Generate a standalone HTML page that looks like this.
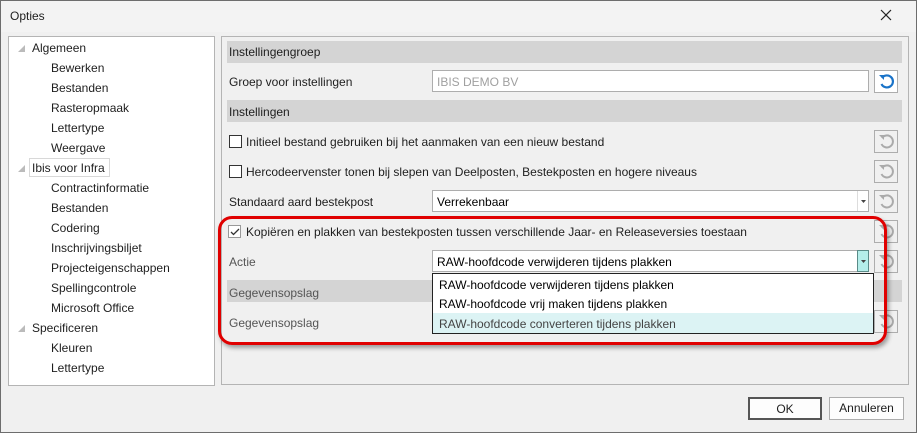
<!DOCTYPE html>
<html><head><style>
*{margin:0;padding:0;box-sizing:border-box}
body{width:917px;height:433px;background:#f0f0f0;font-family:"Liberation Sans",sans-serif;font-size:12px;color:#1e1e1e;position:relative;overflow:hidden}
.a{position:absolute;white-space:nowrap}
.win{position:absolute;left:0;top:0;width:917px;height:433px;border:1px solid #6d6d6d}
.t{position:absolute;line-height:14px}
.hdr{position:absolute;background:#d4d4d4;height:22px}
.inp{position:absolute;background:#fff;border:1px solid #adadad;height:22px}
.rb{position:absolute;width:24px;height:23px;border:1px solid #adadad;background:#f0f0f0}
.cb{position:absolute;width:13px;height:13px;border:1px solid #333;background:#fff}
.btn{position:absolute;height:23px;border:1px solid #adadad;background:#fdfdfd;text-align:center;line-height:21px}
</style></head><body>
<div class="win"></div>
<div class="a" style="left:1px;top:1px;width:915px;height:31px;background:#f3f3f3"></div>
<div class="t" style="left:10px;top:9px">Opties</div>
<svg class="a" style="left:880px;top:9px" width="12" height="12"><path d="M1 1L11 11M11 1L1 11" stroke="#222" stroke-width="1.2"/></svg>

<!-- tree -->
<div class="a" style="left:8px;top:36px;width:207px;height:350px;background:#fff;border:1px solid #b4b4b4"></div>
<svg class="a" style="left:18px;top:45px" width="8" height="8"><path d="M7 0L7 7L0 7Z" fill="#bbb"/></svg>
<svg class="a" style="left:18px;top:165px" width="8" height="8"><path d="M7 0L7 7L0 7Z" fill="#bbb"/></svg>
<svg class="a" style="left:18px;top:325px" width="8" height="8"><path d="M7 0L7 7L0 7Z" fill="#bbb"/></svg>
<div class="a" style="left:29px;top:158px;width:81px;height:19px;border:1px solid #d8d8d8"></div>
<div class="t" style="left:32px;top:41px">Algemeen</div>
<div class="t" style="left:51px;top:61px">Bewerken</div>
<div class="t" style="left:51px;top:81px">Bestanden</div>
<div class="t" style="left:51px;top:101px">Rasteropmaak</div>
<div class="t" style="left:51px;top:121px">Lettertype</div>
<div class="t" style="left:51px;top:141px">Weergave</div>
<div class="t" style="left:32px;top:161px">Ibis voor Infra</div>
<div class="t" style="left:51px;top:181px">Contractinformatie</div>
<div class="t" style="left:51px;top:201px">Bestanden</div>
<div class="t" style="left:51px;top:221px">Codering</div>
<div class="t" style="left:51px;top:241px">Inschrijvingsbiljet</div>
<div class="t" style="left:51px;top:261px">Projecteigenschappen</div>
<div class="t" style="left:51px;top:281px">Spellingcontrole</div>
<div class="t" style="left:51px;top:301px">Microsoft Office</div>
<div class="t" style="left:32px;top:321px">Specificeren</div>
<div class="t" style="left:51px;top:341px">Kleuren</div>
<div class="t" style="left:51px;top:361px">Lettertype</div>

<!-- right panel -->
<div class="a" style="left:221px;top:36px;width:688px;height:349px;border:1px solid #b4b4b4"></div>
<div class="hdr" style="left:227px;top:41px;width:675px"></div>
<div class="t" style="left:229px;top:45px">Instellingengroep</div>
<div class="t" style="left:229px;top:75px">Groep voor instellingen</div>
<div class="inp" style="left:432px;top:70px;width:437px"></div>
<div class="t" style="left:437px;top:75px;color:#a0a0a0">IBIS DEMO BV</div>
<div class="rb" style="left:874px;top:70px;background:#fff"></div>
<svg class="a" style="left:878px;top:73px" width="17" height="17"><path d="M4 5A6 6 0 1 1 3.5 11" fill="none" stroke="#1a73c8" stroke-width="2.2"/><path d="M1 2L6 2L6 7Z" fill="#1a73c8"/></svg>
<div class="hdr" style="left:227px;top:100px;width:675px"></div>
<div class="t" style="left:229px;top:105px">Instellingen</div>

<div class="cb" style="left:229px;top:135px"></div>
<div class="t" style="left:246px;top:135px">Initieel bestand gebruiken bij het aanmaken van een nieuw bestand</div>
<div class="cb" style="left:229px;top:165px"></div>
<div class="t" style="left:246px;top:165px">Hercodeervenster tonen bij slepen van Deelposten, Bestekposten en hogere niveaus</div>
<div class="t" style="left:229px;top:195px">Standaard aard bestekpost</div>
<div class="inp" style="left:432px;top:190px;width:437px"></div>
<div class="t" style="left:437px;top:195px;color:#000">Verrekenbaar</div>
<div class="a" style="left:857px;top:191px;width:1px;height:20px;background:#ddd"></div>
<svg class="a" style="left:861px;top:200px" width="5" height="3"><path d="M0 0H5L2.5 3Z" fill="#444"/></svg>

<!-- reset grey -->
<svg style="display:none"><defs></defs></svg>
<div class="rb" style="left:874px;top:130px"></div>
<div class="rb" style="left:874px;top:160px"></div>
<div class="rb" style="left:874px;top:190px"></div>
<div class="rb" style="left:874px;top:220px"></div>
<div class="rb" style="left:874px;top:250px"></div>
<div class="rb" style="left:874px;top:310px"></div>
<svg class="a" style="left:878px;top:133px" width="17" height="17"><path d="M4 5A6 6 0 1 1 3.5 11" fill="none" stroke="#aaa" stroke-width="2"/><path d="M1 2L6 2L6 7Z" fill="#aaa"/></svg>
<svg class="a" style="left:878px;top:163px" width="17" height="17"><path d="M4 5A6 6 0 1 1 3.5 11" fill="none" stroke="#aaa" stroke-width="2"/><path d="M1 2L6 2L6 7Z" fill="#aaa"/></svg>
<svg class="a" style="left:878px;top:193px" width="17" height="17"><path d="M4 5A6 6 0 1 1 3.5 11" fill="none" stroke="#aaa" stroke-width="2"/><path d="M1 2L6 2L6 7Z" fill="#aaa"/></svg>
<svg class="a" style="left:878px;top:223px" width="17" height="17"><path d="M4 5A6 6 0 1 1 3.5 11" fill="none" stroke="#aaa" stroke-width="2"/><path d="M1 2L6 2L6 7Z" fill="#aaa"/></svg>
<svg class="a" style="left:878px;top:253px" width="17" height="17"><path d="M4 5A6 6 0 1 1 3.5 11" fill="none" stroke="#aaa" stroke-width="2"/><path d="M1 2L6 2L6 7Z" fill="#aaa"/></svg>
<svg class="a" style="left:878px;top:313px" width="17" height="17"><path d="M4 5A6 6 0 1 1 3.5 11" fill="none" stroke="#aaa" stroke-width="2"/><path d="M1 2L6 2L6 7Z" fill="#aaa"/></svg>

<div class="cb" style="left:228px;top:225px;border-color:#999"></div>
<svg class="a" style="left:230px;top:228px" width="10" height="8"><path d="M1 4L3.5 6.5L9 1" fill="none" stroke="#333" stroke-width="1.3"/></svg>
<div class="t" style="left:246px;top:225px">Kopiëren en plakken van bestekposten tussen verschillende Jaar- en Releaseversies toestaan</div>
<div class="t" style="left:229px;top:255px;color:#555">Actie</div>
<div class="inp" style="left:432px;top:250px;width:437px"></div>
<div class="t" style="left:437px;top:255px;color:#000">RAW-hoofdcode verwijderen tijdens plakken</div>
<div class="a" style="left:857px;top:250px;width:12px;height:22px;background:#b4eeea;border:1px solid #5a8b88"></div>
<svg class="a" style="left:861px;top:260px" width="5" height="3"><path d="M0 0H5L2.5 3Z" fill="#444"/></svg>
<div class="hdr" style="left:227px;top:280px;width:205px"></div>
<div class="hdr" style="left:873px;top:280px;width:29px"></div>
<div class="t" style="left:229px;top:286px;color:#555">Gegevensopslag</div>
<div class="t" style="left:229px;top:316px;color:#555">Gegevensopslag</div>

<div class="a" style="left:432px;top:273px;width:442px;height:61px;background:#fff;border:1px solid #222"></div>
<div class="a" style="left:433px;top:313px;width:440px;height:20px;background:#dcf3f4"></div>
<div class="t" style="left:439px;top:278px;color:#000">RAW-hoofdcode verwijderen tijdens plakken</div>
<div class="t" style="left:439px;top:297px;color:#000">RAW-hoofdcode vrij maken tijdens plakken</div>
<div class="t" style="left:439px;top:317px;color:#444">RAW-hoofdcode converteren tijdens plakken</div>

<div class="a" style="left:218px;top:216px;width:669px;height:129px;border:3px solid #e00000;border-radius:14px;box-shadow:2px 3px 4px rgba(0,0,0,0.35)"></div>

<div class="btn" style="left:748px;top:397px;width:74px;border:2px solid #555">OK</div>
<div class="btn" style="left:829px;top:397px;width:75px">Annuleren</div>
</body></html>
